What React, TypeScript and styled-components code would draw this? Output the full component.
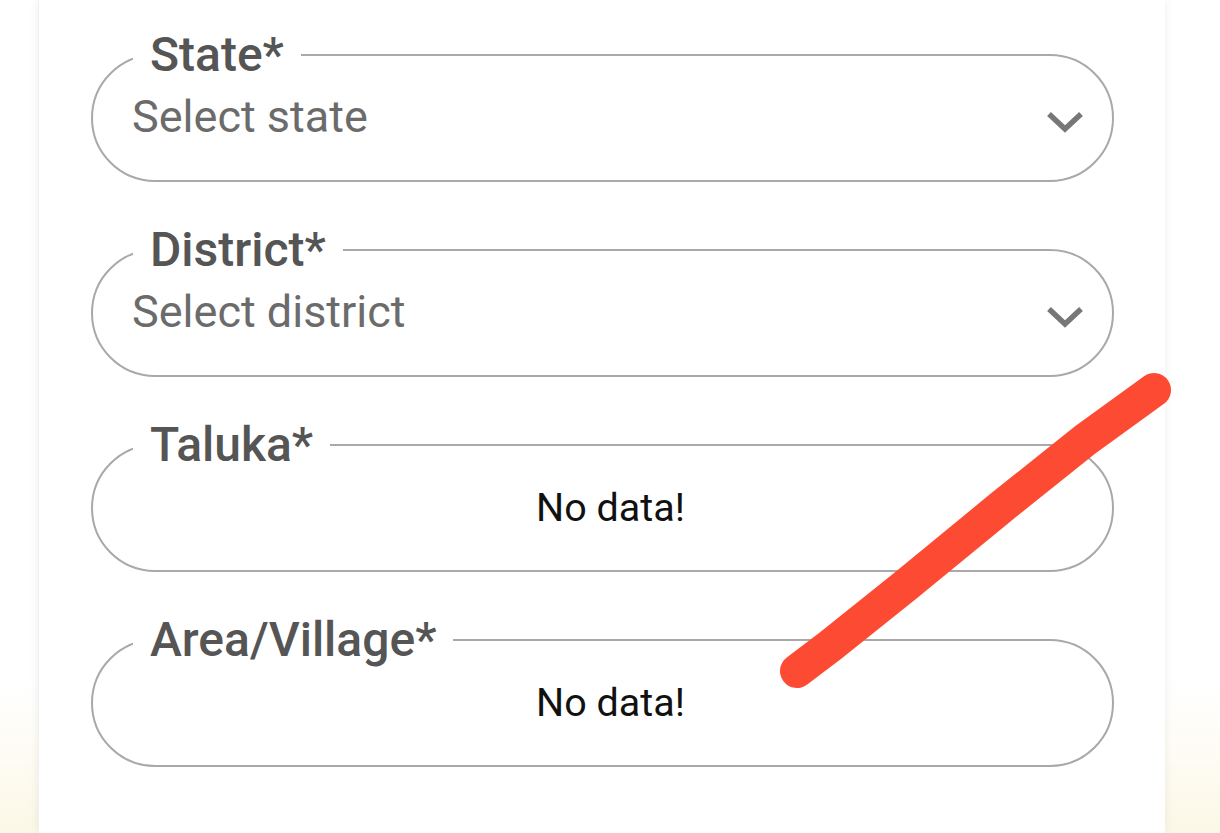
import React from "react";
import styled, { createGlobalStyle } from "styled-components";

const GlobalStyle = createGlobalStyle`
  html, body {
    margin: 0;
    padding: 0;
  }
  body {
    font-family: Roboto, "Noto Sans", Arial, sans-serif;
    background: linear-gradient(to bottom, #ffffff 0%, #ffffff 82%, #fcf8e7 100%);
    min-height: 833px;
    overflow: hidden;
  }
`;

const Page = styled.div`
  position: relative;
  height: 833px;
  display: flex;
`;

const Card = styled.div`
  margin-left: 38px;
  width: 1127px;
  height: 833px;
  background: #ffffff;
  box-shadow: 0 0 10px rgba(0, 0, 0, 0.07);
  border-left: 1px solid #f0f0f0;
  box-sizing: border-box;
  padding: 31px 0 0 52px;
  display: flex;
  flex-direction: column;
  gap: 44px;
`;

const Field = styled.fieldset`
  margin: 0;
  width: 1023px;
  box-sizing: border-box;
  border: 2px solid #a9a9a9;
  border-radius: 64px;
  padding: 0 28px 24px 40px;
  min-inline-size: 0;
`;

const Legend = styled.legend`
  padding: 0 17px;
  font-size: 48px;
  line-height: 48px;
  font-weight: 500;
  color: #555555;
`;

const Row = styled.div<{ $centered?: boolean }>`
  height: 77px;
  display: flex;
  align-items: center;
  justify-content: ${(p) => (p.$centered ? "center" : "space-between")};
`;

const Placeholder = styled.span`
  font-size: 45px;
  color: #6b6b6b;
  margin-left: -1px;
  margin-top: -3px;
`;

const Empty = styled.span`
  font-size: 39.5px;
  color: #111111;
  margin-left: 4px;
`;

const Chevron = styled.svg`
  width: 38px;
  height: 24px;
  margin-top: 8px;
  flex-shrink: 0;
`;

const Annotation = styled.svg`
  position: absolute;
  left: 0;
  top: 0;
  width: 1220px;
  height: 833px;
  pointer-events: none;
`;

type FieldDef = { label: string; placeholder?: string };

const fields: FieldDef[] = [
  { label: "State*", placeholder: "Select state" },
  { label: "District*", placeholder: "Select district" },
  { label: "Taluka*" },
  { label: "Area/Village*" },
];

export default function App() {
  return (
    <>
      <GlobalStyle />
      <Page>
        <Card>
          {fields.map((f) => (
            <Field key={f.label}>
              <Legend>{f.label}</Legend>
              {f.placeholder ? (
                <Row>
                  <Placeholder>{f.placeholder}</Placeholder>
                  <Chevron viewBox="0 0 38 24">
                    <polyline
                      points="3,4 19,19 35,4"
                      fill="none"
                      stroke="#777777"
                      strokeWidth="5.5"
                    />
                  </Chevron>
                </Row>
              ) : (
                <Row $centered>
                  <Empty>No data!</Empty>
                </Row>
              )}
            </Field>
          ))}
        </Card>
        <Annotation viewBox="0 0 1220 833">
          <path
            d="M 797 671 L 830 646 L 905 586 L 1000 508 L 1085 440 L 1154 390"
            fill="none"
            stroke="#fd4b33"
            strokeWidth="34"
            strokeLinecap="round"
            strokeLinejoin="round"
          />
        </Annotation>
      </Page>
    </>
  );
}
